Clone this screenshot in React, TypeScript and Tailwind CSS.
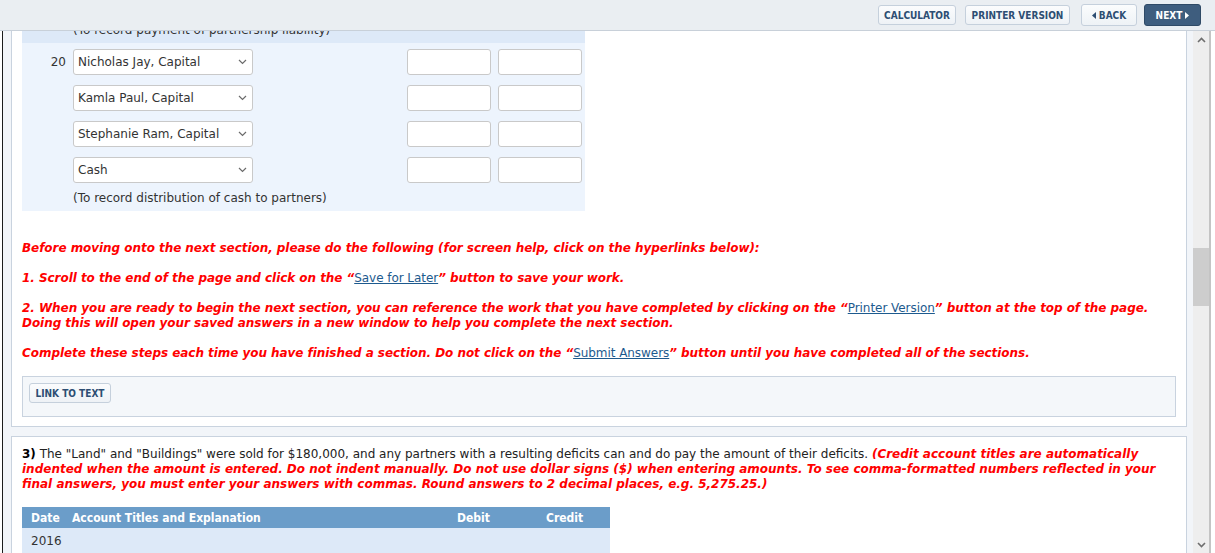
import React from 'react';

const rows = ['Nicholas Jay, Capital', 'Kamla Paul, Capital', 'Stephanie Ram, Capital', 'Cash'];

function Chevron() {
  return (
    <svg width="9" height="6" viewBox="0 0 9 6" className="shrink-0">
      <path d="M1 1l3.5 3.5L8 1" fill="none" stroke="#6b6b6b" strokeWidth="1.2" />
    </svg>
  );
}

function TopButton({ children, dark = false, w }: { children: React.ReactNode; dark?: boolean; w: string }) {
  return (
    <div
      className={`flex h-[20px] items-center justify-center gap-[3px] rounded-[3px] border font-['DejaVu_Sans_Condensed','DejaVu_Sans',sans-serif] text-[10px] font-bold font-stretch-condensed ${w} ${
        dark
          ? 'h-[22px] border-[#2f4a66] bg-[#3e5d7e] text-white'
          : 'border-[#c5d0dc] bg-gradient-to-b from-[#fbfcfd] to-[#eef2f6] text-[#2d4e73]'
      }`}
    >
      {children}
    </div>
  );
}

export default function App() {
  return (
    <div className="flex h-[553px] w-[1215px] flex-col overflow-hidden bg-white font-['DejaVu_Sans',sans-serif] text-[12px] text-[#222]">
      {/* Top toolbar */}
      <div className="flex h-[31px] shrink-0 items-center justify-end border-b border-[#c8d0d9] bg-[#eaeef2] pr-[14px]">
        <TopButton w="w-[78px]">CALCULATOR</TopButton>
        <div className="ml-[9px]">
          <TopButton w="w-[105px]">PRINTER VERSION</TopButton>
        </div>
        <div className="ml-[11px]">
          <TopButton w="w-[56px] h-[22px]">
            <svg width="4" height="7" viewBox="0 0 4 7"><path d="M4 0L0 3.5 4 7z" fill="#2d4e73" /></svg>
            BACK
          </TopButton>
        </div>
        <div className="ml-[7px]">
          <TopButton dark w="w-[57px]">
            NEXT
            <svg width="4" height="7" viewBox="0 0 4 7"><path d="M0 0l4 3.5L0 7z" fill="#fff" /></svg>
          </TopButton>
        </div>
      </div>

      {/* Body */}
      <div className="flex min-h-0 flex-1">
        <div className="w-[2px] bg-white" />
        <div className="w-[1px] bg-[#1c1c1c]" />
        <div className="min-w-0 flex-1 overflow-hidden bg-[#f2f5f9] pl-[8px] pr-[6px]">
          {/* Section 2 (scrolled) */}
          <div className="-mt-[26px] border border-[#c9d3df] bg-white px-[10px] pb-[9px] pt-[10px]">
            <div className="w-[563px] bg-[#edf4fd]">
              <div className="h-[27px] bg-[#dde9f8] pl-[51px] pt-[7px] leading-[15px] text-[#333]">
                (To record payment of partnership liability)
              </div>
              <div className="flex flex-col gap-[10px] pt-[6px]">
                {rows.map((r, i) => (
                  <div key={r} className="flex h-[26px] items-center">
                    <div className="w-[51px] pr-[7px] text-right text-[#333]">{i === 0 ? '20' : ''}</div>
                    <div className="flex h-[26px] w-[180px] items-center justify-between rounded-[3px] border border-[#c9c9c9] bg-white pl-[4px] pr-[5px] text-[#333]">
                      <span>{r}</span>
                      <Chevron />
                    </div>
                    <div className="ml-[154px] h-[26px] w-[84px] rounded-[3px] border border-[#c9c9c9] bg-white" />
                    <div className="ml-[7px] h-[26px] w-[84px] rounded-[3px] border border-[#c9c9c9] bg-white" />
                  </div>
                ))}
              </div>
              <div className="pb-[5px] pl-[51px] pt-[7px] leading-[16px] text-[#333]">
                (To record distribution of cash to partners)
              </div>
            </div>

            <div className="mt-[30px] text-[12px] font-bold italic leading-[15px] tracking-[-0.05px] text-[#f00]">
              <p>
                Before moving onto the next section, please do the following (for screen help, click on the hyperlinks
                below):
              </p>
              <p className="mt-[15px]">
                1. Scroll to the end of the page and click on the “
                <a className="font-normal not-italic text-[#1d5a8e] underline">Save for Later</a>” button to save your
                work.
              </p>
              <p className="mt-[15px]">
                2. When you are ready to begin the next section, you can reference the work that you have completed by
                clicking on the “<a className="font-normal not-italic text-[#1d5a8e] underline">Printer Version</a>”
                button at the top of the page.
                <br />
                Doing this will open your saved answers in a new window to help you complete the next section.
              </p>
              <p className="mt-[15px]">
                Complete these steps each time you have finished a section. Do not click on the “
                <a className="font-normal not-italic text-[#1d5a8e] underline">Submit Answers</a>” button until you have
                completed all of the sections.
              </p>
            </div>

            <div className="mt-[15px] border border-[#c9d3df] bg-[#f4f7fa] px-[6px] pb-[13px] pt-[6px]">
              <div className="flex h-[20px] w-[82px] items-center justify-center rounded-[3px] border border-[#c5d0dc] bg-gradient-to-b from-[#fbfcfd] to-[#eef2f6] font-['DejaVu_Sans_Condensed','DejaVu_Sans',sans-serif] text-[10px] font-bold text-[#2d4e73] font-stretch-condensed">
                LINK TO TEXT
              </div>
            </div>
          </div>

          {/* Section 3 */}
          <div className="mt-[9px] border border-[#c9d3df] bg-white px-[10px] pt-[10px]">
            <p className="leading-[15px] text-[#222]">
              <b className="text-black">3)</b> The "Land" and "Buildings" were sold for $180,000, and any partners with a
              resulting deficits can and do pay the amount of their deficits.{' '}
              <span className="font-bold italic text-[#f00]">
                (Credit account titles are automatically
                <br />
                indented when the amount is entered. Do not indent manually. Do not use dollar signs ($) when entering
                amounts. To see comma-formatted numbers reflected in your
                <br />
                final answers, you must enter your answers with commas. Round answers to 2 decimal places, e.g.
                5,275.25.)
              </span>
            </p>
            <div className="mt-[15px] w-[588px]">
              <div className="flex h-[21px] items-center bg-[#6b9dc9] font-['DejaVu_Sans_Condensed','DejaVu_Sans',sans-serif] font-bold text-white font-stretch-condensed">
                <div className="w-[50px] pl-[9px]">Date</div>
                <div className="w-[385px]">Account Titles and Explanation</div>
                <div className="w-[89px]">Debit</div>
                <div>Credit</div>
              </div>
              <div className="flex h-[26px] items-center bg-[#dde9f8] pl-[9px] text-[#333]">2016</div>
            </div>
          </div>
        </div>

        {/* Scrollbar */}
        <div className="flex w-[16px] flex-col items-center bg-[#eeeeee]">
          <svg width="9" height="6" viewBox="0 0 9 6" className="mt-[6px]">
            <path d="M1 5l3.5-3.5L8 5" fill="none" stroke="#6e6e6e" strokeWidth="1.6" />
          </svg>
          <div className="mt-[205px] h-[58px] w-full bg-[#cdcdcd]" />
          <div className="flex-1" />
          <svg width="9" height="6" viewBox="0 0 9 6" className="mb-[5px]">
            <path d="M1 1l3.5 3.5L8 1" fill="none" stroke="#6e6e6e" strokeWidth="1.6" />
          </svg>
        </div>
        <div className="w-[2px] bg-[#c4c4c4]" />
        <div className="w-[4px] bg-white" />
      </div>
    </div>
  );
}
